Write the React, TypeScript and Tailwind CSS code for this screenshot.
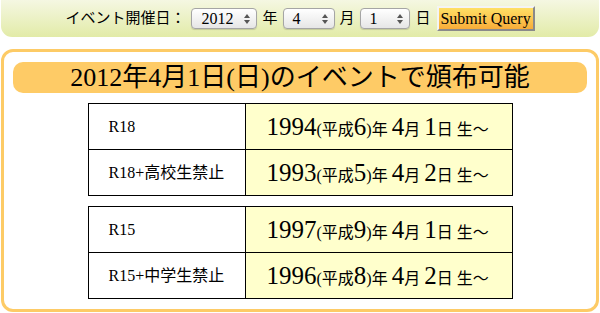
import React from 'react';

const serif = "font-['Liberation_Serif','Noto_Sans_CJK_JP',serif]";
const sans = "font-['Liberation_Sans','Noto_Sans_CJK_JP',sans-serif]";

interface Row {
  label: string;
  year: string;
  heisei: string;
  month: string;
  day: string;
}

const groups: Row[][] = [
  [
    { label: 'R18', year: '1994', heisei: '6', month: '4', day: '1' },
    { label: 'R18+高校生禁止', year: '1993', heisei: '5', month: '4', day: '2' },
  ],
  [
    { label: 'R15', year: '1997', heisei: '9', month: '4', day: '1' },
    { label: 'R15+中学生禁止', year: '1996', heisei: '8', month: '4', day: '2' },
  ],
];

function FakeSelect({ value, width }: { value: string; width: string }) {
  return (
    <div
      className={`relative h-[21px] ${width} rounded-[4px] border border-[#a5a5a5] bg-gradient-to-b from-white to-[#e6e6e6] shadow-[0_1px_1px_rgba(0,0,0,0.15)]`}
    >
      <span className={`absolute left-[9px] top-[1px] text-[16px] leading-[18px] text-black ${serif}`}>{value}</span>
      <svg className="absolute right-[6px] top-[5px]" width="6" height="10" viewBox="0 0 6 10">
        <path d="M3 0 L6 4 L0 4 Z" fill="#555" />
        <path d="M0 6 L6 6 L3 10 Z" fill="#555" />
      </svg>
    </div>
  );
}

export default function App() {
  return (
    <div className="w-[600px] h-[313px] bg-white overflow-hidden">
      {/* date picker bar */}
      <div
        className={`mx-[1px] h-[37px] rounded-b-[11px] bg-gradient-to-b from-[#f5f7e2] to-[#e2eba7] flex items-center justify-center text-[15px] text-black ${sans}`}
      >
        <span className="mr-[6px]">イベント開催日：</span>
        <FakeSelect value="2012" width="w-[66px]" />
        <span className="mx-[5px]">年</span>
        <FakeSelect value="4" width="w-[52px]" />
        <span className="mx-[5px]">月</span>
        <FakeSelect value="1" width="w-[50px]" />
        <span className="mx-[6px]">日</span>
        <button
          className={`h-[25px] w-[98px] border-2 border-t-[#f4f4f4] border-l-[#f4f4f4] border-r-[#8a8a8a] border-b-[#8a8a8a] bg-gradient-to-b from-[#fee065] to-[#f8ac38] text-[16px] leading-none text-black ${serif}`}
        >
          Submit Query
        </button>
      </div>

      {/* result panel */}
      <div className="mx-[1px] mt-[12px] h-[263px] rounded-[12px] border-[3px] border-[#fdcb66] px-[9px] pt-[10px]">
        <div
          className={`h-[31px] rounded-[10px] bg-[#fecb66] flex items-center justify-center text-[26px] leading-none text-black ${serif}`}
        >
          2012年4月1日(日)のイベントで頒布可能
        </div>

        <div className="mt-[10px] flex flex-col items-center gap-[10px]">
          {groups.map((rows, gi) => (
            <table key={gi} className={`w-[425px] border-collapse border border-black ${serif}`}>
              <tbody>
                {rows.map((r) => (
                  <tr key={r.label} className="h-[46px]">
                    <td className="w-[157px] border border-black bg-white pl-[20px] text-[16px] text-black">
                      {r.label}
                    </td>
                    <td className="border border-black bg-[#ffffcc] pl-[21px] text-black whitespace-nowrap">
                      <span className="text-[25px]">{r.year}</span>
                      <span className="text-[16px]">(平成</span>
                      <span className="text-[25px]">{r.heisei}</span>
                      <span className="text-[16px]">)年 </span>
                      <span className="text-[25px]">{r.month}</span>
                      <span className="text-[16px]">月 </span>
                      <span className="text-[25px]">{r.day}</span>
                      <span className="text-[16px]">日 生～</span>
                    </td>
                  </tr>
                ))}
              </tbody>
            </table>
          ))}
        </div>
      </div>
    </div>
  );
}
